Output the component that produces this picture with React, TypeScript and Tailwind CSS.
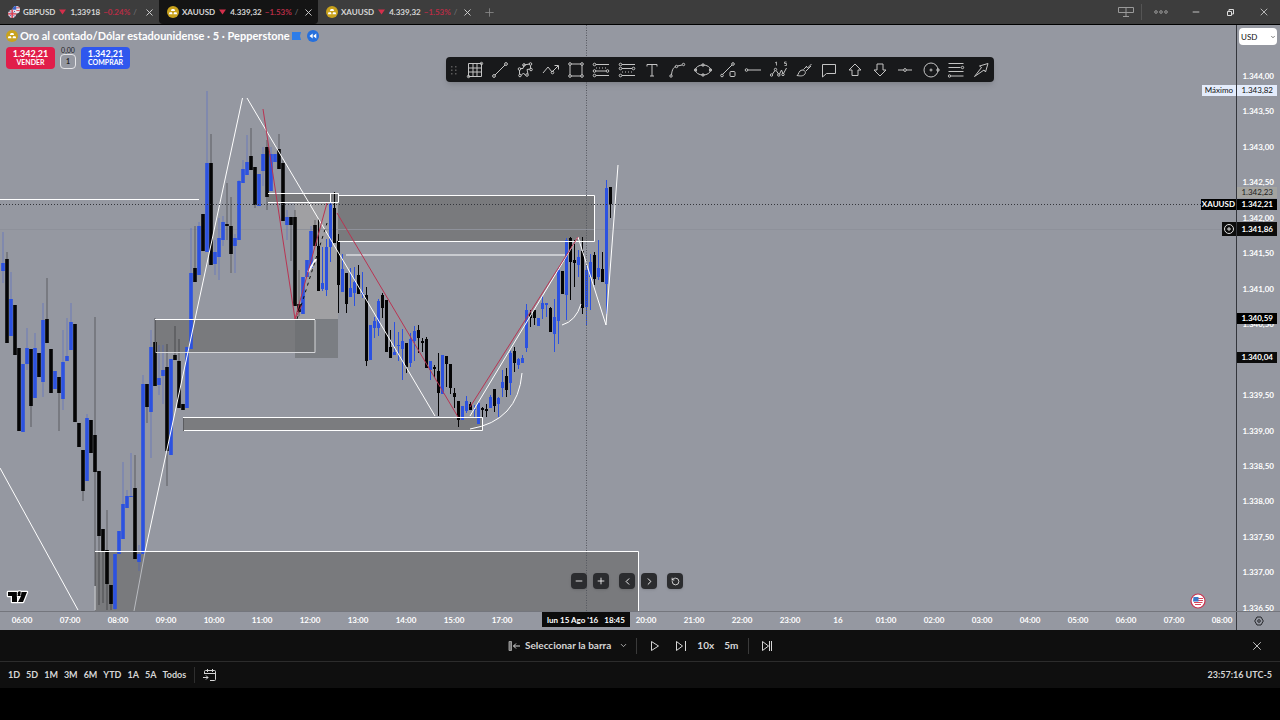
import type { ReactNode } from "react";
import { ChevronDown, ChevronLeft, ChevronRight, Minus, Plus, RotateCcw, X } from "lucide-react";

// x, body top, body bottom, wick top, wick bottom, direction
type Candle = [number, number, number, number, number, "u" | "d"];

const candles: Candle[] = [
  [3, 263, 271, 232, 283, "u"],
  [7, 259, 343, 252, 343, "d"],
  [11, 299, 336, 272, 336, "u"],
  [15, 305, 355, 305, 355, "d"],
  [19, 348, 431, 348, 431, "d"],
  [23, 364, 432, 364, 432, "u"],
  [27, 348, 364, 328, 370, "u"],
  [31, 349, 406, 349, 427, "d"],
  [35, 348, 398, 333, 398, "u"],
  [39, 353, 377, 353, 377, "d"],
  [43, 320, 382, 303, 397, "u"],
  [47, 319, 343, 278, 343, "d"],
  [51, 349, 393, 349, 393, "d"],
  [55, 371, 389, 371, 389, "u"],
  [59, 377, 393, 377, 431, "d"],
  [63, 362, 399, 330, 410, "u"],
  [67, 356, 361, 318, 361, "u"],
  [71, 322, 350, 303, 350, "u"],
  [75, 324, 422, 324, 422, "d"],
  [79, 423, 447, 423, 447, "d"],
  [83, 450, 491, 450, 501, "d"],
  [87, 418, 481, 414, 481, "u"],
  [91, 420, 453, 420, 453, "d"],
  [95, 435, 472, 317, 610, "d"],
  [99, 471, 536, 471, 605, "d"],
  [103, 529, 552, 529, 603, "d"],
  [107, 550, 584, 510, 610, "d"],
  [111, 585, 604, 585, 610, "d"],
  [115, 554, 609, 554, 610, "u"],
  [119, 531, 554, 531, 554, "u"],
  [123, 504, 539, 462, 539, "u"],
  [127, 496, 508, 490, 508, "u"],
  [131, 496, 497, 453, 497, "u"],
  [135, 488, 559, 455, 559, "d"],
  [139, 554, 562, 545, 571, "u"],
  [143, 384, 554, 375, 554, "u"],
  [147, 384, 407, 384, 423, "d"],
  [151, 347, 412, 330, 458, "u"],
  [155, 342, 386, 318, 386, "d"],
  [159, 378, 385, 345, 395, "u"],
  [163, 370, 376, 345, 404, "u"],
  [167, 367, 451, 344, 486, "d"],
  [171, 359, 455, 359, 455, "u"],
  [175, 355, 360, 326, 360, "d"],
  [179, 361, 408, 339, 408, "d"],
  [183, 404, 410, 404, 410, "d"],
  [187, 347, 408, 347, 408, "u"],
  [191, 273, 349, 228, 349, "u"],
  [195, 268, 282, 226, 282, "d"],
  [199, 226, 275, 222, 275, "u"],
  [203, 214, 251, 214, 251, "d"],
  [207, 163, 252, 91, 252, "u"],
  [211, 163, 265, 134, 265, "d"],
  [215, 252, 264, 240, 275, "u"],
  [219, 238, 257, 218, 280, "u"],
  [223, 222, 240, 216, 246, "u"],
  [227, 224, 226, 183, 240, "d"],
  [231, 226, 254, 197, 273, "d"],
  [235, 238, 246, 234, 273, "u"],
  [239, 181, 240, 180, 240, "u"],
  [243, 169, 183, 160, 183, "u"],
  [247, 162, 175, 135, 175, "u"],
  [251, 156, 170, 128, 170, "d"],
  [255, 167, 205, 167, 208, "d"],
  [259, 174, 206, 174, 206, "u"],
  [263, 154, 171, 147, 186, "u"],
  [267, 147, 197, 140, 210, "d"],
  [271, 154, 191, 147, 191, "u"],
  [275, 154, 162, 154, 162, "u"],
  [279, 149, 169, 134, 169, "d"],
  [283, 163, 221, 160, 221, "d"],
  [287, 217, 225, 210, 240, "u"],
  [291, 217, 225, 217, 261, "d"],
  [295, 217, 306, 210, 306, "d"],
  [299, 304, 312, 270, 316, "d"],
  [303, 277, 314, 277, 314, "u"],
  [307, 260, 277, 260, 277, "u"],
  [311, 231, 268, 226, 268, "u"],
  [315, 225, 246, 220, 246, "d"],
  [319, 246, 291, 219, 291, "d"],
  [323, 283, 289, 247, 291, "u"],
  [327, 247, 290, 239, 296, "u"],
  [331, 204, 247, 203, 262, "u"],
  [335, 208, 243, 192, 243, "d"],
  [339, 241, 285, 234, 313, "d"],
  [343, 269, 292, 254, 292, "u"],
  [347, 273, 304, 273, 313, "d"],
  [351, 288, 297, 268, 297, "u"],
  [355, 282, 293, 267, 306, "u"],
  [359, 275, 294, 265, 294, "d"],
  [363, 293, 294, 272, 298, "u"],
  [367, 295, 361, 287, 366, "d"],
  [371, 325, 360, 325, 360, "u"],
  [375, 321, 328, 317, 338, "u"],
  [379, 301, 328, 299, 336, "u"],
  [383, 295, 308, 293, 318, "d"],
  [387, 300, 352, 300, 352, "d"],
  [391, 347, 358, 330, 358, "d"],
  [395, 352, 355, 322, 355, "u"],
  [399, 345, 346, 332, 361, "u"],
  [403, 341, 349, 329, 380, "u"],
  [407, 343, 367, 343, 373, "d"],
  [410, 339, 363, 333, 367, "u"],
  [414, 331, 341, 326, 361, "u"],
  [418, 330, 338, 325, 353, "d"],
  [422, 341, 343, 338, 352, "d"],
  [426, 339, 368, 337, 368, "d"],
  [430, 361, 370, 361, 380, "u"],
  [434, 367, 369, 365, 377, "d"],
  [438, 371, 393, 353, 416, "d"],
  [442, 355, 394, 355, 394, "u"],
  [446, 356, 364, 356, 387, "d"],
  [450, 364, 388, 364, 394, "d"],
  [454, 393, 397, 388, 408, "d"],
  [458, 401, 420, 401, 427, "d"],
  [462, 406, 420, 406, 420, "u"],
  [466, 401, 411, 396, 413, "u"],
  [470, 404, 410, 402, 410, "d"],
  [474, 409, 410, 405, 417, "u"],
  [478, 403, 424, 402, 424, "u"],
  [482, 408, 410, 407, 417, "d"],
  [486, 409, 411, 404, 417, "d"],
  [490, 397, 408, 395, 408, "u"],
  [494, 389, 406, 389, 412, "d"],
  [498, 398, 404, 397, 417, "u"],
  [502, 382, 388, 370, 397, "u"],
  [506, 376, 390, 368, 397, "d"],
  [510, 353, 383, 351, 395, "u"],
  [514, 351, 363, 347, 372, "d"],
  [518, 359, 365, 358, 369, "u"],
  [522, 358, 363, 355, 363, "u"],
  [526, 310, 348, 304, 352, "u"],
  [530, 313, 318, 310, 327, "d"],
  [534, 310, 318, 310, 325, "d"],
  [538, 318, 326, 318, 326, "u"],
  [542, 303, 309, 296, 319, "u"],
  [546, 303, 305, 303, 317, "u"],
  [550, 308, 332, 307, 332, "d"],
  [554, 317, 334, 299, 352, "u"],
  [558, 270, 321, 268, 344, "u"],
  [562, 271, 294, 271, 294, "d"],
  [566, 240, 295, 238, 320, "u"],
  [570, 238, 262, 237, 300, "d"],
  [574, 260, 263, 240, 287, "d"],
  [578, 257, 265, 250, 277, "u"],
  [582, 251, 308, 237, 314, "d"],
  [586, 270, 307, 266, 326, "u"],
  [590, 262, 277, 254, 310, "u"],
  [594, 255, 279, 252, 285, "d"],
  [598, 268, 277, 240, 280, "u"],
  [602, 269, 282, 252, 282, "d"],
  [606, 188, 284, 180, 314, "u"],
  [610, 187, 204, 187, 218, "d"],
];

// blank entries are steps whose label gives way to a marker
const prices = [
  "1.344,00", "1.343,50", "1.343,00", "1.342,50", "1.342,00", "1.341,50", "1.341,00", "1.340,50",
  "", "1.339,50", "1.339,00", "1.338,50", "1.338,00", "1.337,50", "1.337,00", "1.336,50",
];

const hours = [
  "06:00", "07:00", "08:00", "09:00", "10:00", "11:00", "12:00", "13:00", "14:00", "15:00", "17:00", "", "",
  "20:00", "21:00", "22:00", "23:00", "16", "01:00", "02:00", "03:00", "04:00", "05:00", "06:00", "07:00", "08:00",
];

const ranges = ["1D", "5D", "1M", "3M", "6M", "YTD", "1A", "5A", "Todos"];

const tools: { name: string; icon: ReactNode }[] = [
  { name: "Cuadrícula", icon: <><path d="M2.5 2.5h13v13h-13zM7 2.5v13M11 2.5v13M2.5 7h13M2.5 11h13" /><circle cx="2.5" cy="15.5" r="1.2" /><circle cx="15.5" cy="2.5" r="1.2" /></> },
  { name: "Línea de tendencia", icon: <><path d="M4 14 14 4" /><circle cx="3" cy="15" r="1.4" /><circle cx="15" cy="3" r="1.4" /></> },
  { name: "Camino cerrado", icon: <><path d="M4.5 7.5h2.500L8 4l5.500-1M14.500 4.500v3.500l-3.500.5L12 13M9.500 14.500 7.500 12 5 14.500M3.500 13v-4" /><circle cx="8" cy="4" r="1.3" /><circle cx="14.5" cy="3" r="1.3" /><circle cx="15" cy="8.500" r="1.3" /><circle cx="3.500" cy="8" r="1.3" /><circle cx="4" cy="14.5" r="1.3" /><circle cx="11" cy="14" r="1.3" /></> },
  { name: "Ruta", icon: <><path d="m1 12 5-6 4 5 6-6M12.500 4.500H16.500V8.500" /><circle cx="10.500" cy="11.500" r="1.3" /></> },
  { name: "Rectángulo", icon: <><path d="M4 3h10M4 15h10M3 4v10M15 4v10" /><circle cx="3" cy="3" r="1.3" /><circle cx="15" cy="3" r="1.3" /><circle cx="3" cy="15" r="1.3" /><circle cx="15" cy="15" r="1.3" /></> },
  { name: "Posición larga", icon: <><path d="M4 3.500h13M4 10h10M4 14.500h13" /><path d="M4 7h12" strokeDasharray="1 2" /><circle cx="2.500" cy="3.500" r="1.3" /><circle cx="2.500" cy="10" r="1.3" /><circle cx="15.500" cy="10" r="1.3" /><circle cx="2.500" cy="14.500" r="1.3" /></> },
  { name: "Posición corta", icon: <><path d="M4 3.500h13M4 7.500h10M4 14.500h13" /><path d="M4 11h12" strokeDasharray="1 2" /><circle cx="2.500" cy="3.500" r="1.3" /><circle cx="2.500" cy="7.500" r="1.3" /><circle cx="15.500" cy="7.500" r="1.3" /><circle cx="2.500" cy="14.500" r="1.3" /></> },
  { name: "Texto", icon: <path d="M4 5.500v-2h10v2M9 3.500v11.500M7 15h4" /> },
  { name: "Curva", icon: <><path d="M3.500 14C4 8 6 6 8 5.500M9.500 5 14 4" /><circle cx="3" cy="15" r="1.2" /><circle cx="8.500" cy="5.500" r="1.2" /><circle cx="15.500" cy="3.500" r="1.2" /></> },
  { name: "Elipse", icon: <><ellipse cx="9" cy="9" rx="7.500" ry="5" /><circle cx="1.500" cy="9" r="1.200" /><circle cx="16.500" cy="9" r="1.200" /><circle cx="9" cy="4" r="1.200" /><circle cx="9" cy="14" r="1.200" /></> },
  { name: "Información", icon: <><path d="m4 13 9-9" /><circle cx="3" cy="14.500" r="1.3" /><circle cx="14" cy="3" r="1.3" /><rect x="11" y="10.500" width="5" height="5" rx="1" /></> },
  { name: "Rayo horizontal", icon: <><path d="M4 9h13" /><circle cx="2.500" cy="9" r="1.3" /></> },
  { name: "Onda de Elliott", icon: <><path d="m2.500 13 2.500-3.500M6.500 10l2 3M9.500 13l2-4 1.500 3.500M13.500 12.500 16.500 7" /><path d="M5 2l1.500-1v3.500M16.500 1h-2v1.500h2v2h-2" strokeWidth=".8" /><circle cx="1.500" cy="14" r="1.200" /><circle cx="5.500" cy="8.500" r="1.200" /><circle cx="8.800" cy="14" r="1.200" /><circle cx="13" cy="13.500" r="1.200" /></> },
  { name: "Pincel", icon: <path d="M2 14.500c2-1 1.500-5 5-5.500 3 0 4 2 3 4-2 2.500-5 2-8 1.500zM8.500 8.500 12 5M11 10l5-5M11 5l1.500 2 4-4" /> },
  { name: "Globo", icon: <path d="M2.500 3.500h13v9h-9l-4 3.500z" /> },
  { name: "Flecha arriba", icon: <path d="m9 3 6 6h-3v5.500H6V9H3z" /> },
  { name: "Flecha abajo", icon: <path d="m9 15 6-6h-3V3H6v6H3z" /> },
  { name: "Línea horizontal", icon: <><path d="M2 9h5.500M10.500 9H16" /><circle cx="9" cy="9" r="1.400" /></> },
  { name: "Círculo", icon: <><circle cx="9" cy="9" r="7" /><circle cx="9" cy="9" r="1" /><circle cx="16" cy="9" r="1.200" /></> },
  { name: "Retroceso de Fibonacci", icon: <><path d="M1.500 2.500h15M1.500 6.500h12M1.500 10.500h15M4 15h12.500" /><circle cx="15.500" cy="6.500" r="1.200" /><circle cx="2.500" cy="15" r="1.200" /></> },
  { name: "Flecha", icon: <path d="m2.500 15.500 7-9-2-1.500 8.500-2.500-2.500 8.500-1.500-2z" /> },
];

const tabs = [
  { symbol: "GBPUSD", price: "1,33918", change: "−0.24%", gold: false, active: false },
  { symbol: "XAUUSD", price: "4.339,32", change: "−1.53%", gold: true, active: true },
  { symbol: "XAUUSD", price: "4.339,32", change: "−1.53%", gold: true, active: false },
];

function GoldIcon() {
  return (
    <svg viewBox="0 0 12 12" className="size-3 shrink-0">
      <circle cx="6" cy="6" r="6" fill="#c9a21c" />
      <path d="M4.700 3h2.600l.8 2H3.900zM2.500 6.200h2.400l.7 2H1.800zM7.100 6.200h2.400l.7 2H6.400z" fill="#fff" />
    </svg>
  );
}

function PoundIcon() {
  return (
    <svg viewBox="0 0 13 13" className="size-3 shrink-0">
      <circle cx="9" cy="4" r="4" fill="#e8eaf2" />
      <path d="M8 0h1v4H5a4 4 0 0 1 3-4z" fill="#3b62c4" />
      <path d="M9 2h3.500M9 5h3.800" stroke="#d8364a" />
      <circle cx="4.500" cy="8.500" r="4.500" fill="#e9d5df" />
      <path d="M4.500 4v9M0 8.500h9" stroke="#d8364a" strokeWidth="1.500" />
      <path d="m1.500 5.500 1.500 1.500M7.500 5.500 6 7M1.500 11.500 3 10M7.500 11.500 6 10" stroke="#37509f" />
    </svg>
  );
}

function CandleShape({ candle: [x, top, bottom, high, low, dir] }: { candle: Candle }) {
  const fill = dir === "u" ? "#2c52e0" : "#050506";
  if (x < 319) {
    return (
      <g fill={fill}>
        <rect x={x - 1} y={high} width="2" height={low - high} opacity=".2" />
        <rect x={x - 1.8} y={top} width="3.6" height={bottom - top} />
      </g>
    );
  }
  const left = x < 410 ? x - 2 : x - 1;
  return (
    <g fill={fill}>
      <rect x={left + 1} y={high} width="1" height={low - high} />
      <rect x={left} y={top} width="3" height={bottom - top} />
    </g>
  );
}

function Chart() {
  return (
    <svg className="absolute left-0 top-0" width="1236" height="586" viewBox="0 25 1236 586" fill="none">
      {/* zones */}
      <rect x="295" y="203" width="43" height="116" fill="#aaa8a5" opacity=".55" />
      <rect x="268" y="194" width="70" height="9" fill="#797a7d" />
      <rect x="338" y="196" width="256" height="45" fill="#797a7d" />
      <rect x="155" y="320" width="160" height="33" fill="#797a7d" />
      <rect x="295" y="319" width="43" height="39" fill="#6b6c70" opacity=".6" />
      <rect x="183" y="418" width="299" height="13" fill="#7b7c7f" />
      <rect x="95" y="552" width="543" height="59" fill="#797a7d" />
      <path d="M0 229.500H1236" stroke="#8e919a" />

      {candles.map((c) => <CandleShape key={c[0]} candle={c} />)}

      {/* zone borders */}
      <g stroke="#fff">
        <path d="M0 199.500H199" />
        <path d="M268 193.500H338.500V202.500H268M330.500 194v8" />
        <path d="M338 195.500H594.500V241.500H338" />
        <path d="M155 319.500H315M183 417.500H482.500V430.500H183M95 551.500H638.500V611" />
        <path d="M155 352.500H315V320" stroke="#d5d6d9" />
        <path d="M346 255H565" stroke="#c9cbd0" strokeWidth="2" />
        <path d="M155.500 320v33M183.500 418v13" stroke="#5b5c60" />
        <path d="M95 586v24" stroke="#c2c4c9" strokeWidth="1.500" />
      </g>

      {/* hand-drawn structure */}
      <g stroke="#fff">
        <path d="M145 552 242.500 98M247 98 435 416M0 468l78 142" />
        <path d="m134 611 11-59" stroke="#b9bbc0" />
        <path d="m470 416 108-179 28 88 12-160" />
        <path d="M308 272 316 259" strokeWidth="2" />
        <path d="M470 429q48-8 52-56M562 325q14-4 19-21" />
      </g>
      <g stroke="#b93452">
        <path d="m263 109 32 210 32-116M337 213l121 204M470 407 578 237M295 319l7-14" />
      </g>
      <path d="m297 319 30-96" stroke="#111" strokeDasharray="3 4" />
      <path d="M0 204.500H1236" stroke="#34363c" strokeDasharray="1 2" />
      <path d="M586.500 25V611" stroke="#55575e" strokeDasharray="1 1.500" />
    </svg>
  );
}

function Logo() {
  return (
    <svg viewBox="0 0 24 16" width="24" height="16" className="absolute bottom-1.5 left-1.5" aria-label="TradingView">
      <path d="M2 3h9v3h1a2 2 0 1 1 3-3h6l-4 10h-5l3-6-4 0v6H6V7H2z" fill="#050505" stroke="#fff" strokeWidth="2.500" paintOrder="stroke" strokeLinejoin="round" />
      <circle cx="13" cy="4.800" r="1.500" fill="#050505" />
      <path d="M11.300 3v5M15.200 3 14.500 6.500" stroke="#fff" strokeWidth=".7" />
    </svg>
  );
}

function NavButton({ label, children }: { label: string; children: ReactNode }) {
  return (
    <button aria-label={label} className="flex size-4 items-center justify-center rounded-sm bg-[#2b2c2f] text-white shadow">
      {children}
    </button>
  );
}

export default function App() {
  return (
    <div className="flex h-screen flex-col overflow-hidden bg-black font-['Lato',sans-serif] text-[10px] text-[#d6d6d6]">
      {/* Window tabs */}
      <header className="flex h-[25px] shrink-0 border-b border-black bg-[#3d3d3d]">
        {tabs.map((t, i) => (
          <div
            key={i}
            className={`flex w-[159px] items-center gap-[3px] whitespace-nowrap rounded-b pl-2 pr-1 text-[8px] font-bold ${t.active ? "bg-[#141414]" : "bg-[#3d3d3d]"}`}
          >
            {t.gold ? <GoldIcon /> : <PoundIcon />}
            <span>{t.symbol}</span>
            <svg width="7" height="6" viewBox="0 0 7 6" className="mx-px shrink-0"><path d="M0 .5h7L3.500 5.500z" fill="#d32f4b" /></svg>
            <span>{t.price}</span>
            <span className="text-[#b82d46]">{t.change}</span>
            <span className="font-normal text-[#77777a]">/</span>
            <button aria-label="Cerrar pestaña" className="ml-auto shrink-0"><X size={11} /></button>
          </div>
        ))}
        <button aria-label="Nueva pestaña" className="w-6 pl-1.5 text-[#8b8b8b]"><Plus size={13} strokeWidth={1.5} /></button>
        <div className="ml-auto flex items-center text-[#ddd]">
          <svg width="18" height="14" viewBox="0 0 18 14" fill="none" stroke="#9a9a9a" className="mr-1.5">
            <path d="M1.500 2.500h15v5h-15zM9 2.500v9M6 11.500h6" />
          </svg>
          <span className="h-4 w-px bg-[#555]" />
          <button aria-label="Más" className="mx-3">
            <svg width="14" height="6" viewBox="0 0 14 6" fill="none" stroke="#9a9a9a">
              <circle cx="2" cy="3" r="1.300" /><circle cx="7" cy="3" r="1.300" /><circle cx="12" cy="3" r="1.300" />
            </svg>
          </button>
          <button aria-label="Minimizar" className="flex w-8 justify-center"><Minus size={10} /></button>
          <button aria-label="Restaurar" className="flex w-9 justify-center">
            <svg width="9" height="9" viewBox="0 0 9 9" fill="none" stroke="currentColor">
              <path d="M1.500 3.500h4v4h-4zM3 3V1.500h4.500V6H6" />
            </svg>
          </button>
          <button aria-label="Cerrar" className="flex w-8 justify-center"><X size={12} strokeWidth={1.5} /></button>
        </div>
      </header>

      <main className="flex min-h-0 flex-1 bg-[#9598a1] text-white">
        {/* Plot */}
        <section className="relative min-w-0 flex-1 overflow-hidden">
          <Chart />
          <div className="relative flex items-center gap-0.5 pl-1.5 pt-[3px] text-[11px] leading-4">
            <GoldIcon />
            <h1 className="whitespace-nowrap font-bold">Oro al contado/Dólar estadounidense · 5 · Pepperstone</h1>
            <svg width="9" height="8" viewBox="0 0 9 8"><path d="M0 0h9L8 4l1 4H0z" fill="#2d7de8" /></svg>
            <svg viewBox="0 0 12 12" className="ml-1 size-3">
              <circle cx="6" cy="6" r="6" fill="#2670dd" />
              <path d="M5.700 3.500v5L2.500 6zM9.300 3.500v5L6.100 6z" fill="#fff" />
            </svg>
          </div>
          <div className="relative mt-[3px] flex items-start gap-[5px] pl-1.5 text-center font-bold leading-[9px]">
            <button className="h-[22px] w-[49px] rounded bg-[#e11d4a]">
              <span className="block text-[9px]">1.342,21</span>
              <span className="block text-[7px]">VENDER</span>
            </button>
            <div className="flex w-4 flex-col items-center text-[7px] leading-[7px] text-[#222]">
              <span className="font-normal">0,00</span>
              <button className="h-[15px] w-4 rounded border border-[#e5e5e8]">1</button>
            </div>
            <button className="h-[22px] w-[49px] rounded bg-[#2f57ee]">
              <span className="block text-[9px]">1.342,21</span>
              <span className="block text-[7px]">COMPRAR</span>
            </button>
          </div>

          {/* Favourite drawing tools */}
          <div className="absolute left-[446px] top-8 flex h-[25px] w-[548px] items-center rounded bg-[#18191b] shadow-md">
            <svg width="16" height="12" viewBox="0 0 16 12" fill="#5a5a5a">
              {[2, 5.5, 9].map((y) => (
                <g key={y}><rect x="5" y={y} width="1.500" height="1.500" /><rect x="9" y={y} width="1.500" height="1.500" /></g>
              ))}
            </svg>
            {tools.map(({ name, icon }) => (
              <button key={name} title={name} aria-label={name} className="flex flex-1 justify-center">
                <svg width="18" height="18" viewBox="0 0 18 18" fill="none" stroke="#c4c4c4">{icon}</svg>
              </button>
            ))}
          </div>

          <Logo />
          <div className="absolute bottom-[22px] left-[571px] flex items-center">
            <div className="flex gap-1.5"><NavButton label="Alejar"><Minus size={10} /></NavButton><NavButton label="Acercar"><Plus size={10} /></NavButton></div>
            <div className="mx-2.5 flex gap-1.5"><NavButton label="Atrás"><ChevronLeft size={11} /></NavButton><NavButton label="Adelante"><ChevronRight size={11} /></NavButton></div>
            <NavButton label="Restablecer"><RotateCcw size={9} /></NavButton>
          </div>
          <svg viewBox="0 0 16 16" width="16" height="16" className="absolute bottom-0.5 right-[30px]">
            <circle cx="8" cy="8" r="7" fill="#fff" stroke="#c93350" strokeWidth="1.200" />
            <path d="M8 5.500h5M8 7.500h5M4 9.500h8.500M5 11.500h6" stroke="#d8465c" />
            <path d="M3.500 4h5v4.500H3z" fill="#3a79c9" />
          </svg>

          {/* Tags that lean against the scale */}
          <span className="absolute right-0 top-[60px] bg-[#e4ecfb] px-[3px] text-[8px] leading-[11px] text-[#111]">Máximo</span>
          <span className="absolute right-0 top-[174px] bg-black px-px text-[8px] font-bold leading-[11px]">XAUUSD</span>
          <button aria-label="Añadir alerta" className="absolute right-0 top-[197px] flex h-[14px] w-[14px] items-center justify-center bg-[#0c0c0c]">
            <svg width="12" height="12" viewBox="0 0 12 12" fill="none" stroke="#ddd"><circle cx="6" cy="6" r="4.500" /><path d="M6 4v4M4 6h4" /></svg>
          </button>
        </section>

        {/* Price scale */}
        <aside className="relative w-11 shrink-0 border-l border-[#34363c] text-[8px] font-bold">
          <select aria-label="Moneda" className="absolute left-0.5 top-[3px] h-[17px] w-[38px] appearance-none rounded-sm bg-white pl-0.5 text-[8px] font-normal text-[#111]">
            <option>USD</option>
          </select>
          <ChevronDown size={6} className="pointer-events-none absolute right-1 top-[9px] text-black" />
          <div className="absolute inset-x-0 -bottom-[3px] top-[46px] flex flex-col justify-between pr-1.5 text-right leading-[11px]">
            {prices.map((p, i) => <span key={i} className="h-[11px]">{p}</span>)}
          </div>
          <div className="text-right leading-[11px]">
            <span className="absolute left-0 top-[60px] w-10 bg-[#e4ecfb] pr-1 font-normal text-[#111]">1.343,82</span>
            <span className="absolute left-0 top-[162px] w-10 bg-[#a3a39f] pr-1 font-normal text-[#222]">1.342,23</span>
            <span className="absolute left-0 top-[174px] w-10 bg-black pr-1">1.342,21</span>
            <span className="absolute left-0 top-[197px] w-10 bg-[#0c0c0c] pr-1 leading-[14px]">1.341,86</span>
            <span className="absolute left-0 top-[288px] w-10 bg-black pr-1">1.340,59</span>
            <span className="absolute left-0 top-[327px] w-10 bg-[#0c0c0c] pr-1">1.340,04</span>
          </div>
        </aside>
      </main>

      {/* Time scale */}
      <div className="relative flex h-[19px] shrink-0 border-t border-[#74767d] bg-[#9598a1] text-[8px] font-bold text-white">
        <div className="-ml-0.5 flex min-w-0 flex-1 overflow-hidden leading-4">
          {hours.map((h, i) => <span key={i} className="w-12 shrink-0 text-center">{h}</span>)}
        </div>
        <span className="absolute left-[542px] top-0 flex h-[15px] w-[88px] items-center justify-center gap-1.5 whitespace-nowrap bg-[#0c0c0c]">
          <span>lun 15 Ago '16</span><span>18:45</span>
        </span>
        <button aria-label="Ajustes de escala" className="flex w-11 items-center justify-center border-l border-[#34363c]">
          <svg width="10" height="10" viewBox="0 0 10 10" fill="none" stroke="#25262a">
            <path d="m3 1h4l2.300 4L7 9H3L.7 5z" /><circle cx="5" cy="5" r="1.300" />
          </svg>
        </button>
      </div>

      {/* Bar replay */}
      <div className="flex h-8 shrink-0 items-center border-b border-[#2c2c2c] bg-[#0f0f0f] pl-[508px] pr-4 font-bold">
        <button className="flex items-center gap-1">
          <svg width="13" height="12" viewBox="0 0 13 12" fill="none" stroke="currentColor">
            <path d="M1 1.500h2.500v9H1z" fill="#777" stroke="#999" /><path d="M12 6H5.500M8 3.500 5.500 6 8 8.500" />
          </svg>
          Seleccionar la barra
          <ChevronDown size={9} className="ml-1" />
        </button>
        <span className="ml-2 h-4 w-px bg-[#3a3a3a]" />
        <button aria-label="Reproducir" className="ml-3">
          <svg width="12" height="12" viewBox="0 0 12 12" fill="none" stroke="currentColor"><path d="M2.500 1.500v9L9.500 6z" /></svg>
        </button>
        <button aria-label="Siguiente barra" className="ml-3.5">
          <svg width="12" height="12" viewBox="0 0 12 12" fill="none" stroke="currentColor"><path d="M1.500 1.500v9L7.500 6zM10.500 1v10" /></svg>
        </button>
        <button className="ml-2.5">10x</button>
        <button className="ml-2.5">5m</button>
        <span className="ml-2.5 h-4 w-px bg-[#3a3a3a]" />
        <button aria-label="Ir a tiempo real" className="ml-3">
          <svg width="13" height="12" viewBox="0 0 13 12" fill="none" stroke="currentColor"><path d="M1.500 1.500v9L7.500 6zM8.500 1v10M10.500 1v10" /></svg>
        </button>
        <button aria-label="Cerrar repetición" className="ml-auto"><X size={14} strokeWidth={1.5} /></button>
      </div>

      {/* Date ranges */}
      <footer className="flex h-[26px] shrink-0 items-center bg-[#0f0f0f] px-2 text-[9px] font-bold">
        <div className="flex gap-1.5">
          {ranges.map((r) => <button key={r}>{r}</button>)}
        </div>
        <span className="ml-2 h-4 w-px bg-[#2e2e2e]" />
        <button aria-label="Ir a fecha" className="ml-2">
          <svg width="14" height="14" viewBox="0 0 14 14" fill="none" stroke="currentColor">
            <path d="M1.500 6V3.500a1 1 0 0 1 1-1h9a1 1 0 0 1 1 1v8a1 1 0 0 1-1 1H7M1.500 5.500h11M4.500 1v3M9.500 1v3M0 9.500h5M3 7.500l2 2-2 2" />
          </svg>
        </button>
        <span className="ml-auto">23:57:16 UTC-5</span>
      </footer>
      <div className="h-8 shrink-0" />
    </div>
  );
}
